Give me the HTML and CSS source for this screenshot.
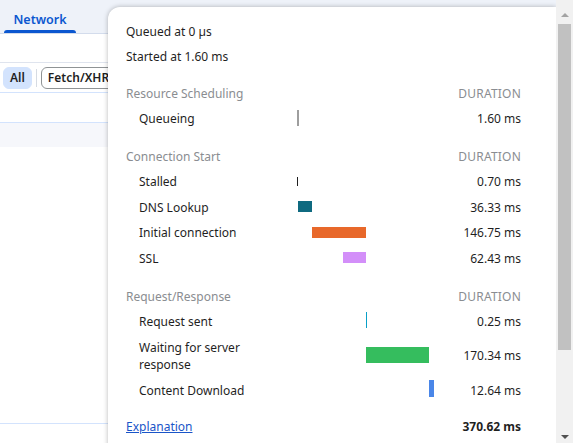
FILE: index.html
```html
<!DOCTYPE html>
<html>
<head>
<meta charset="utf-8">
<link rel="stylesheet" href="styles.css">
</head>
<body>
<div class="app">
  <div class="main">
    <div class="tabbar">
      <div class="tab">Network</div>
    </div>
    <div class="toolbar-blank"></div>
    <div class="filters">
      <span class="chip chip-active">All</span>
      <span class="sep"></span>
      <span class="chip chip-outline">Fetch/XHR</span>
    </div>
    <div class="band-white"></div>
    <div class="band-grey"></div>
    <div class="grid-area"></div>
    <div class="footer-area"></div>

    <div class="popup">
      <div class="popup-content">
        <div class="info">Queued at 0 µs</div>
        <div class="info">Started at 1.60 ms</div>

        <div class="section">
          <div class="row head"><span>Resource Scheduling</span><span class="dur-head">DURATION</span></div>
          <div class="row item">
            <span class="label">Queueing</span>
            <span class="bars"><i class="bar bar-queue" style="left:0px;width:2px"></i></span>
            <span class="value">1.60 ms</span>
          </div>
        </div>

        <div class="section">
          <div class="row head"><span>Connection Start</span><span class="dur-head">DURATION</span></div>
          <div class="row item">
            <span class="label">Stalled</span>
            <span class="bars"><i class="bar bar-stalled" style="left:0px;width:1px"></i></span>
            <span class="value">0.70 ms</span>
          </div>
          <div class="row item">
            <span class="label">DNS Lookup</span>
            <span class="bars"><i class="bar bar-dns" style="left:1px;width:14px"></i></span>
            <span class="value">36.33 ms</span>
          </div>
          <div class="row item">
            <span class="label">Initial connection</span>
            <span class="bars"><i class="bar bar-conn" style="left:15px;width:54px"></i></span>
            <span class="value">146.75 ms</span>
          </div>
          <div class="row item">
            <span class="label">SSL</span>
            <span class="bars"><i class="bar bar-ssl" style="left:46px;width:23px"></i></span>
            <span class="value">62.43 ms</span>
          </div>
        </div>

        <div class="section">
          <div class="row head"><span>Request/Response</span><span class="dur-head">DURATION</span></div>
          <div class="row item">
            <span class="label">Request sent</span>
            <span class="bars"><i class="bar bar-sent" style="left:69px;width:1px"></i></span>
            <span class="value">0.25 ms</span>
          </div>
          <div class="row item tall">
            <span class="label">Waiting for server response</span>
            <span class="bars"><i class="bar bar-wait" style="left:69px;width:63px"></i></span>
            <span class="value">170.34 ms</span>
          </div>
          <div class="row item">
            <span class="label">Content Download</span>
            <span class="bars"><i class="bar bar-download" style="left:132px;width:5px"></i></span>
            <span class="value">12.64 ms</span>
          </div>
        </div>

        <div class="row total">
          <a class="link" href="#">Explanation</a>
          <span class="total-value">370.62 ms</span>
        </div>
      </div>
    </div>
  </div>
  <div class="scrollbar">
    <span class="arrow arrow-up"></span>
    <span class="thumb"></span>
    <span class="spacer"></span>
    <span class="arrow arrow-down"></span>
  </div>
</div>
</body>
</html>
```

FILE: styles.css
```css
* { box-sizing: border-box; }
html, body { margin: 0; padding: 0; }
body {
  width: 573px;
  height: 443px;
  overflow: hidden;
  font-family: "Noto Sans", "Open Sans", sans-serif;
  font-size: 12px;
  color: #1f1f1f;
  background: #fff;
}
.app {
  display: flex;
  height: 443px;
}
.main {
  position: relative;
  flex: 1;
  display: flex;
  flex-direction: column;
  overflow: hidden;
}
.tabbar {
  height: 34px;
  background: #eef2f9;
  border-bottom: 1px solid #d3dcec;
  padding-left: 4px;
  display: flex;
  align-items: flex-end;
}
.tab {
  width: 72px;
  height: 33px;
  padding-top: 12px;
  text-align: center;
  color: #0b57d0;
  font-weight: 600;
  font-size: 12.5px;
  line-height: 16px;
  position: relative;
}
.tab::after {
  content: "";
  position: absolute;
  left: 0;
  right: 0;
  bottom: 0;
  height: 3px;
  background: #0b57d0;
  border-radius: 3px 3px 0 0;
}
.toolbar-blank {
  height: 29px;
  border-bottom: 1px solid #dfe4ee;
}
.filters {
  height: 30px;
  display: flex;
  align-items: center;
  gap: 4px;
  padding-left: 3px;
  border-bottom: 1px solid #d3e3fd;
}
.chip {
  height: 22px;
  line-height: 20px;
  padding: 0 6px;
  border-radius: 6px;
  font-size: 12px;
  font-weight: 600;
}
.chip-active {
  background: #d3e3fd;
  border: 1px solid #d3e3fd;
  color: #1f1f1f;
}
.chip-outline {
  border: 1px solid #8f9395;
  font-weight: 600;
}
.sep {
  width: 1px;
  height: 18px;
  background: #d6dbe3;
}
.band-white {
  height: 30px;
  border-bottom: 1px solid #d3e3fd;
}
.band-grey {
  height: 24px;
  background: #f6f7fb;
}
.grid-area {
  flex: 1;
  border-bottom: 1px solid #d3e3fd;
}
.footer-area {
  height: 19px;
}

/* popup */
.popup {
  position: absolute;
  left: 108px;
  top: 7px;
  right: 0;
  bottom: -10px;
  background: #fff;
  border-top-left-radius: 12px;
  box-shadow: 0 0 5px rgba(0, 0, 0, 0.28);
}
.popup-content {
  padding: 11.5px 35px 0 18px;
}
.info {
  height: 25px;
  line-height: 25px;
}
.section {
  margin-top: 12.5px;
}
.row {
  display: flex;
  align-items: center;
}
.head {
  height: 25px;
  justify-content: space-between;
  color: #8a8d91;
}
.dur-head {
  letter-spacing: 0.2px;
}
.item {
  height: 25.5px;
  padding-left: 13px;
}
.item.tall {
  height: 43px;
}
.item.tall + .item {
  height: 26px;
}
.label {
  width: 158px;
  padding-right: 20px;
  line-height: 17px;
}
.bars {
  position: relative;
  width: 137px;
  height: 100%;
}
.bar {
  position: absolute;
  top: 50%;
  display: block;
}
.value {
  flex: 1;
  text-align: right;
}
.bar-queue { height: 16px; margin-top: -9px; background: #9e9e9e; }
.bar-stalled { height: 9px; margin-top: -5px; background: #1f1f1f; }
.bar-dns { height: 11px; margin-top: -6px; background: #0f6a80; }
.bar-conn { height: 11px; margin-top: -6px; background: #e8682a; }
.bar-ssl { height: 11px; margin-top: -6px; background: #d38ff9; }
.bar-sent { height: 16px; margin-top: -9px; background: #08a0c8; }
.bar-wait { height: 16px; margin-top: -9px; background: #35bd5e; }
.bar-download { height: 17px; margin-top: -10px; background: #4a86e8; }

.total {
  margin-top: 10.5px;
  height: 25px;
  justify-content: space-between;
}
.link {
  color: #1a55c8;
  text-decoration: underline;
}
.total-value {
  font-weight: 700;
}

/* scrollbar */
.scrollbar {
  width: 17px;
  background: #f1f1f1;
  display: flex;
  flex-direction: column;
  align-items: center;
}
.arrow {
  width: 0;
  height: 0;
  border-left: 4px solid transparent;
  border-right: 4px solid transparent;
}
.arrow-up {
  margin-top: 13px;
  border-bottom: 4px solid #a3a3a3;
}
.arrow-down {
  margin-bottom: 4px;
  border-top: 4px solid #505050;
}
.thumb {
  margin-top: 7px;
  width: 13px;
  height: 326px;
  background: #c1c1c1;
}
.spacer { flex: 1; }
```
